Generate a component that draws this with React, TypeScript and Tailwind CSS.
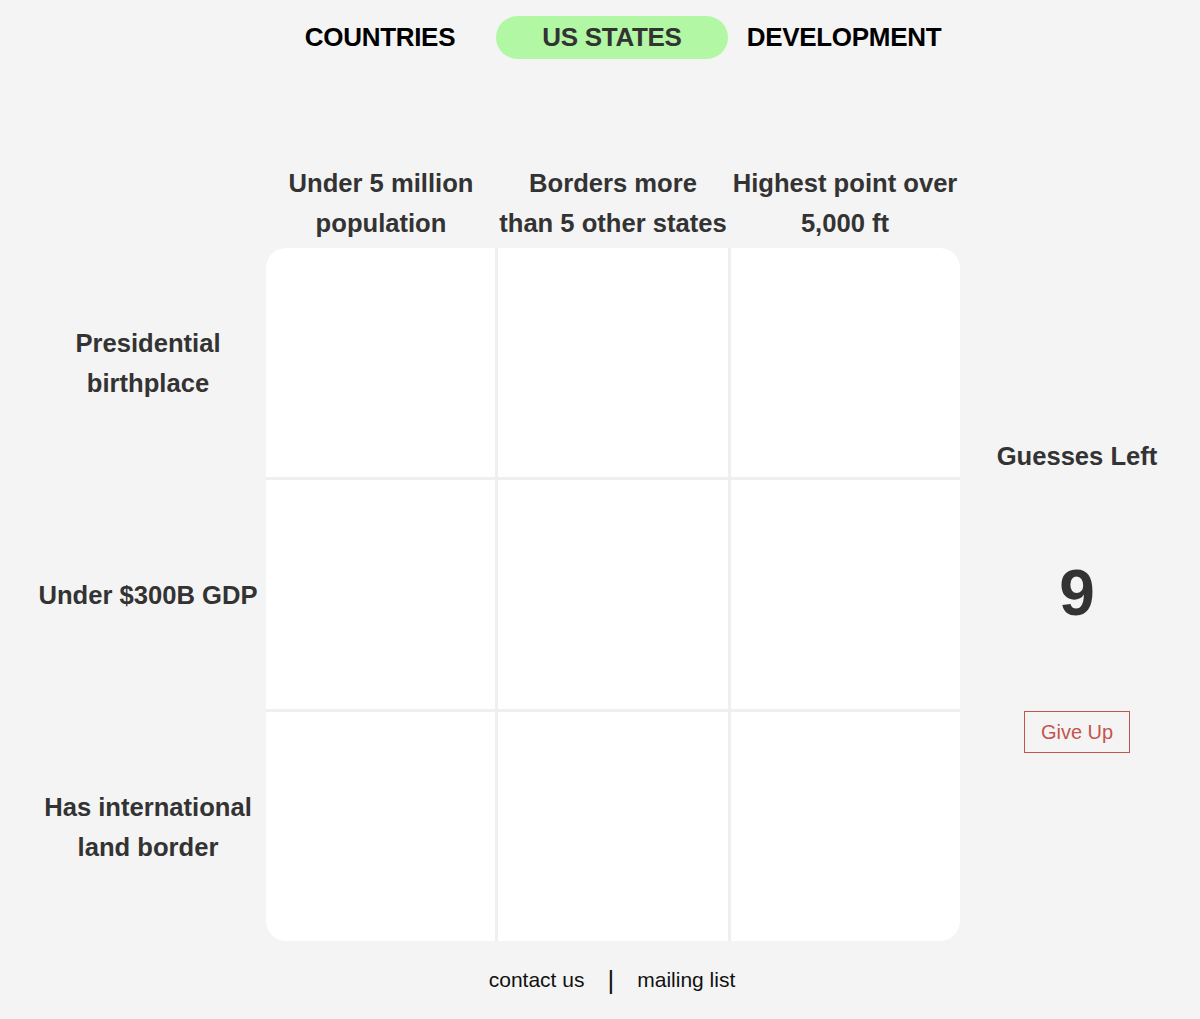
const font = { fontFamily: '"Liberation Sans", Arial, sans-serif' };

const cols = [
  ["Under 5 million", "population"],
  ["Borders more", "than 5 other states"],
  ["Highest point over", "5,000 ft"],
];

const rows = [
  ["Presidential", "birthplace"],
  ["Under $300B GDP"],
  ["Has international", "land border"],
];

export default function App() {
  return (
    <div className="min-h-[1019px] w-[1200px] bg-[#f4f4f4] text-[#333]" style={font}>
      {/* Nav */}
      <nav className="flex pl-[264px] pt-[16px]">
        <a className="flex h-[43px] w-[232px] items-center justify-center text-[26px] font-bold tracking-[-0.3px] text-black">
          COUNTRIES
        </a>
        <a className="flex h-[43px] w-[232px] items-center justify-center rounded-full bg-[#b1f7a4] text-[26px] font-bold tracking-[-0.3px] text-[#333]">
          US STATES
        </a>
        <a className="flex h-[43px] w-[232px] items-center justify-center text-[26px] font-bold tracking-[-0.3px] text-black">
          DEVELOPMENT
        </a>
      </nav>

      {/* Column headers */}
      <div className="mt-[104px] flex pl-[265px]">
        {cols.map((c, i) => (
          <div
            key={i}
            className="w-[232px] whitespace-nowrap text-center text-[25.6px] font-bold leading-[40px]"
          >
            {c[0]}
            <br />
            {c[1]}
          </div>
        ))}
      </div>

      {/* Board */}
      <div className="mt-[5px] grid grid-cols-[266px_694px_240px]">
        <div className="grid grid-rows-3 gap-[3px] pl-[30px]">
          {rows.map((r, i) => (
            <div
              key={i}
              className="flex flex-col items-center justify-center whitespace-nowrap text-center text-[25.6px] font-bold leading-[40px]"
            >
              {r.map((l, j) => (
                <span key={j}>{l}</span>
              ))}
            </div>
          ))}
        </div>

        <div className="grid h-[693px] grid-cols-3 grid-rows-3 gap-[3px] overflow-hidden rounded-[20px] bg-[#efefef]">
          {Array.from({ length: 9 }).map((_, i) => (
            <div key={i} className="bg-white" />
          ))}
        </div>

        <div className="flex flex-col items-center justify-center gap-[77px] pr-[6px]">
          <div className="text-[25.6px] font-bold leading-[40px]">Guesses Left</div>
          <div className="text-[64px] font-bold leading-[80px]">9</div>
          <button className="mt-[1px] flex h-[42px] w-[106px] items-center justify-center border border-[#c4554d] text-[20px] text-[#c4554d]">
            Give Up
          </button>
        </div>
      </div>

      {/* Footer */}
      <footer className="mt-[25px] flex items-center justify-center pl-[24px] text-[21px] leading-[28px] text-[#111]">
        <a>contact us</a>
        <span className="mx-[23px] text-[26px] leading-[28px]">|</span>
        <a>mailing list</a>
      </footer>
    </div>
  );
}
